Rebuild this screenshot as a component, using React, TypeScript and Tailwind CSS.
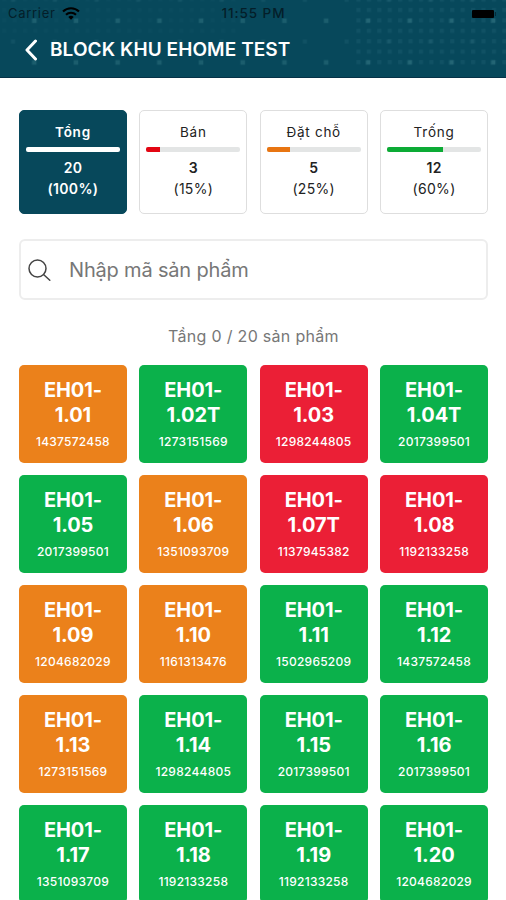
const ORANGE = 'bg-[#eb811b]';
const GREEN = 'bg-[#0bb14b]';
const RED = 'bg-[#eb1f36]';

const stats = [
  { label: 'Tổng', count: 20, pct: 100, bar: 'bg-white', active: true },
  { label: 'Bán', count: 3, pct: 15, bar: 'bg-[#e30613]', active: false },
  { label: 'Đặt chỗ', count: 5, pct: 25, bar: 'bg-[#e87511]', active: false },
  { label: 'Trống', count: 12, pct: 60, bar: 'bg-[#0cab35]', active: false },
];

const products: [string, string, string][] = [
  ['1.01', '1437572458', ORANGE],
  ['1.02T', '1273151569', GREEN],
  ['1.03', '1298244805', RED],
  ['1.04T', '2017399501', GREEN],
  ['1.05', '2017399501', GREEN],
  ['1.06', '1351093709', ORANGE],
  ['1.07T', '1137945382', RED],
  ['1.08', '1192133258', RED],
  ['1.09', '1204682029', ORANGE],
  ['1.10', '1161313476', ORANGE],
  ['1.11', '1502965209', GREEN],
  ['1.12', '1437572458', GREEN],
  ['1.13', '1273151569', ORANGE],
  ['1.14', '1298244805', GREEN],
  ['1.15', '2017399501', GREEN],
  ['1.16', '2017399501', GREEN],
  ['1.17', '1351093709', GREEN],
  ['1.18', '1192133258', GREEN],
  ['1.19', '1192133258', GREEN],
  ['1.20', '1204682029', GREEN],
];

function DotPattern() {
  return (
    <svg className="absolute inset-0 h-full w-full" aria-hidden="true">
      <defs>
        <pattern id="fine" x="353.5" y="5" width="10.42" height="10.42" patternUnits="userSpaceOnUse">
          <rect x="3" y="3" width="4" height="4" fill="#7cc0c4" fillOpacity="0.08" />
        </pattern>
        <pattern id="bright" x="13.5" y="0" width="41.7" height="41.7" patternUnits="userSpaceOnUse">
          <rect x="18.5" y="18.5" width="4.5" height="4.5" fill="#7cc0c4" fillOpacity="0.17" />
        </pattern>
        <pattern id="soft" x="-7.5" y="21" width="41.7" height="41.7" patternUnits="userSpaceOnUse">
          <rect x="18.5" y="18.5" width="4" height="4" fill="#7cc0c4" fillOpacity="0.08" />
        </pattern>
      </defs>
      <rect width="506" height="66" fill="url(#bright)" />
      <rect width="506" height="66" fill="url(#soft)" />
      <rect x="354" width="152" height="66" fill="url(#fine)" />
      <rect width="240" height="36" fill="url(#fine)" opacity="0.3" />
    </svg>
  );
}

export default function App() {
  return (
    <div className="h-[900px] w-[506px] overflow-hidden bg-white font-['Inter','Noto_Sans',sans-serif]">
      <header className="relative h-[78px] border-b border-[#063247] bg-[#07485b]">
        <DotPattern />
        <div className="relative flex h-[27px] items-center px-2 text-[13px] text-[#041e29]">
          <div className="flex flex-1 items-center gap-[6px]">
            <span className="tracking-[0.7px]">Carrier</span>
            <svg width="18" height="13" viewBox="0 0 18 13" fill="none" stroke="#000" strokeWidth="2.1">
              <path d="M1 4.600a11.400 11.400 0 0 1 16 0M4 7.800a7 7 0 0 1 10 0" />
              <path d="M6.300 10a3.800 3.800 0 0 1 5.400 0L9 12.800Z" fill="#000" stroke="none" />
            </svg>
          </div>
          <span className="pl-[3px] text-[13.5px] font-medium tracking-[0.9px]">11:55 PM</span>
          <div className="flex flex-1 items-center justify-end gap-px pr-[2px]">
            <div className="h-[8px] w-[22px] rounded-[1px] bg-black" />
            <div className="h-[4px] w-px bg-[#052c3a]" />
          </div>
        </div>
        <div className="relative flex h-[46px] items-center pl-[24px]">
          <svg width="14" height="22" viewBox="0 0 14 22" fill="none" stroke="#fff" strokeWidth="3" strokeLinecap="round" strokeLinejoin="round">
            <path d="M11.5 2 3 11l8.500 9" />
          </svg>
          <h1 className="ml-[12px] whitespace-nowrap pt-px text-[19px] font-semibold tracking-[0.08px] text-white">BLOCK KHU EHOME TEST</h1>
        </div>
      </header>

      <main className="pl-[19px] pr-[18px] pt-[32px]">
        <section className="grid grid-cols-4 gap-x-[12.5px]">
          {stats.map((s) => (
            <div
              key={s.label}
              className={`flex h-[104px] flex-col items-center rounded-[5px] border px-[6px] pt-[11px] text-[14px] leading-[21px] tracking-[0.3px] ${
                s.active ? 'border-[#07485b] bg-[#07485b] font-semibold text-white' : 'border-[#dedede] bg-white text-[#222]'
              }`}
            >
              <div className="text-[13.5px] tracking-[0.75px]">{s.label}</div>
              <div className="mt-[4px] h-[5px] w-full overflow-hidden rounded-[2px] bg-[#e3e5e5]">
                <div className={`h-full ${s.bar}`} style={{ width: `${s.pct}%` }} />
              </div>
              <div className="mt-[5px] font-semibold">{s.count}</div>
              <div>({s.pct}%)</div>
            </div>
          ))}
        </section>

        <div className="mt-[25px] flex h-[61px] items-center rounded-[6px] border-2 border-[#ededed] pl-[6px]">
          <svg width="24" height="24" viewBox="0 0 24 24" fill="none" stroke="#444" strokeWidth="1.5" strokeLinecap="round">
            <circle cx="10.500" cy="10.500" r="8.500" />
            <path d="m16.800 16.800 6 5.500" />
          </svg>
          <span className="ml-[18px] text-[20px] tracking-[-0.18px] text-[#777]">Nhập mã sản phẩm</span>
        </div>

        <p className="mt-[24px] text-center text-[16px] leading-[24px] tracking-[0.3px] text-[#777]">Tầng 0 / 20 sản phẩm</p>

        <section className="mt-[17px] grid grid-cols-4 gap-x-[12.5px] gap-y-[12.5px]">
          {products.map(([unit, id, color]) => (
            <div key={unit} className={`flex h-[97.5px] flex-col items-center rounded-[5px] pt-[13px] text-white ${color}`}>
              <div className="text-center text-[20px] font-bold leading-[24.500px] tracking-[-0.1px]">
                EH01-
                <br />
                {unit}
              </div>
              <div className="mt-[7px] text-[12px] font-medium leading-[16px] tracking-[0.25px]">{id}</div>
            </div>
          ))}
        </section>
      </main>
    </div>
  );
}
